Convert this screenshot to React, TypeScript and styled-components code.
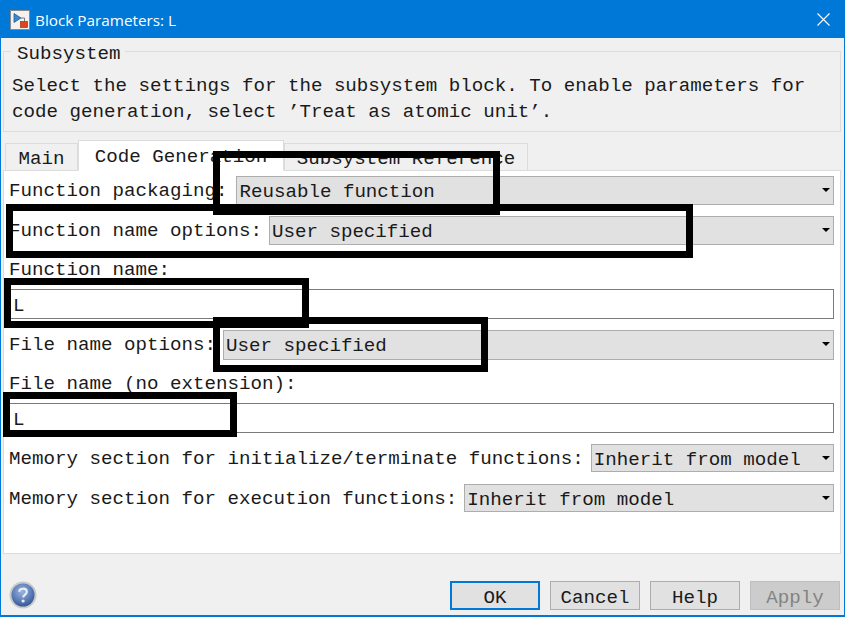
import React from 'react';
import styled, {createGlobalStyle} from 'styled-components';

const GlobalStyle = createGlobalStyle`
    html, body {
        margin: 0;
        padding: 0;
        background: #f0f0f0;
    }
`;

interface Mark {
    left: number;
    top: number;
    width: number;
    height: number;
}

// black boxes somebody drew over the screenshot
const marks: Mark[] = [
    {left: 213, top: 151, width: 287, height: 64},
    {left: 6, top: 204, width: 687, height: 54},
    {left: 4, top: 278, width: 305, height: 50},
    {left: 213, top: 317, width: 275, height: 55},
    {left: 3, top: 392, width: 234, height: 45},
];

const App = () => {
    return (
        <Window>
            <GlobalStyle/>
            <TitleBar>
                <svg width="20" height="20" viewBox="0 0 20 20">
                    <rect x="0.5" y="0.5" width="19" height="19" fill="#f4f1ee" stroke="#8a8a8a"/>
                    <path d="M4 3.5 L11 8 L4 12.5 Z" fill="#3f86c9" stroke="#1f5f9c" strokeWidth="0.8"/>
                    <path d="M11 8 H14.5 V12" fill="none" stroke="#7a7a7a"/>
                    <rect x="10.5" y="11.5" width="7" height="6" fill="#d9481c" stroke="#a8320f" strokeWidth="0.7"/>
                </svg>
                <TitleText>Block Parameters: L</TitleText>
                <CloseIcon width="13" height="13" viewBox="0 0 13 13">
                    <path d="M0.5 0.5 L12.5 12.5 M12.5 0.5 L0.5 12.5" stroke="#fff" strokeWidth="1.1"/>
                </CloseIcon>
            </TitleBar>
            <Body>
                <GroupBox>
                    <Legend>Subsystem</Legend>
                    <Description>
                        Select the settings for the subsystem block. To enable parameters for{'\n'}
                        code generation, select ’Treat as atomic unit’.
                    </Description>
                </GroupBox>
                <Tabs>
                    <Tab $width={73}>Main</Tab>
                    <Tab $width={206} $active>Code Generation</Tab>
                    <Tab $width={244}>Subsystem Reference</Tab>
                </Tabs>
                <Panel>
                    <Row $height={29}>
                        <Label $gap={9}>Function packaging:</Label>
                        <Select>Reusable function<Caret/></Select>
                    </Row>
                    <Row $height={29} $top={11}>
                        <Label>Function name options:</Label>
                        <Select>User specified<Caret/></Select>
                    </Row>
                    <PlainLabel $top={13}>Function name:</PlainLabel>
                    <TextField>L</TextField>
                    <Row $height={30} $top={11}>
                        <Label>File name options:</Label>
                        <Select>User specified<Caret/></Select>
                    </Row>
                    <PlainLabel $top={12}>File name (no extension):</PlainLabel>
                    <TextField>L</TextField>
                    <Row $height={28} $top={11}>
                        <Label>Memory section for initialize/terminate functions:</Label>
                        <Select>Inherit from model<Caret/></Select>
                    </Row>
                    <Row $height={28} $top={12}>
                        <Label>Memory section for execution functions:</Label>
                        <Select>Inherit from model<Caret/></Select>
                    </Row>
                </Panel>
                <Footer>
                    <svg width="28" height="28" viewBox="0 0 28 28">
                        <defs>
                            <radialGradient id="helpBall" cx="45%" cy="35%" r="70%">
                                <stop offset="0" stopColor="#9db4dc"/>
                                <stop offset="0.6" stopColor="#5a7cb8"/>
                                <stop offset="1" stopColor="#2f4f8f"/>
                            </radialGradient>
                        </defs>
                        <circle cx="14" cy="14" r="13.5" fill="#c8c8c8"/>
                        <circle cx="14" cy="14" r="11.5" fill="url(#helpBall)"/>
                        <path d="M10.2 10.8 C10.4 6.8 17.6 6.6 17.8 10.8 C17.9 13.6 14.3 13.6 14.2 16.4" fill="none" stroke="#e8edf6" strokeWidth="2.2"/>
                        <circle cx="14.1" cy="20" r="1.6" fill="#e8edf6"/>
                    </svg>
                    <Buttons>
                        <Button $focused>OK</Button>
                        <Button>Cancel</Button>
                        <Button>Help</Button>
                        <Button $disabled>Apply</Button>
                    </Buttons>
                </Footer>
            </Body>
            {marks.map((mark, index) => (
                <Marker
                    key={index}
                    style={{left: mark.left, top: mark.top, width: mark.width, height: mark.height}}
                />
            ))}
        </Window>
    );
};

const Window = styled.div`
    position: relative;
    width: 845px;
    height: 617px;
    box-sizing: border-box;
    display: flex;
    flex-direction: column;
    background: #f0f0f0;
    border: solid #0078d7;
    border-width: 1px 1px 2px 1px;
    overflow: hidden;
    font-family: "Liberation Mono", "DejaVu Sans Mono", monospace;
    font-size: 19.17px;
    color: #1a1a1a;
`;

const TitleBar = styled.div`
    height: 37px;
    flex: none;
    display: flex;
    align-items: center;
    padding: 0 0 0 9px;
    background: #0078d7;
    color: #fff;
`;

const TitleText = styled.span`
    margin-left: 5px;
    font-family: "Open Sans", "Liberation Sans", sans-serif;
    font-size: 15.3px;
    color: #fff;
`;

const CloseIcon = styled.svg`
    margin-left: auto;
    margin-right: 14px;
`;

const Body = styled.div`
    flex: 1;
    display: flex;
    flex-direction: column;
    padding: 13px 3px 0 2px;
    min-height: 0;
`;

const GroupBox = styled.div`
    position: relative;
    height: 81px;
    flex: none;
    box-sizing: border-box;
    border: 1px solid #dcdcdc;
`;

const Legend = styled.span`
    position: absolute;
    left: 7px;
    top: -9px;
    padding: 0 5px 0 6px;
    height: 20px;
    line-height: 22px;
    background: #f0f0f0;
`;

const Description = styled.div`
    margin: 21px 0 0 8px;
    line-height: 26px;
    white-space: pre;
`;

const Tabs = styled.div`
    display: flex;
    align-items: flex-end;
    height: 31px;
    margin-top: 8px;
    padding-left: 2px;
    flex: none;
    position: relative;
    z-index: 1;
    margin-bottom: -1px;
`;

const Tab = styled.div<{ $width: number; $active?: boolean }>`
    width: ${props => props.$width}px;
    height: ${props => (props.$active ? 31 : 28)}px;
    box-sizing: border-box;
    text-align: center;
    line-height: ${props => (props.$active ? 32 : 30)}px;
    background: ${props => (props.$active ? '#fff' : '#f0f0f0')};
    border: 1px solid #dcdcdc;
    border-bottom-color: ${props => (props.$active ? '#fff' : '#dcdcdc')};
`;

const Panel = styled.div`
    height: 384px;
    flex: none;
    box-sizing: border-box;
    display: flex;
    flex-direction: column;
    padding: 5px 6px 0 5px;
    background: #fff;
    border: 1px solid #dcdcdc;
`;

const Row = styled.div<{ $height: number; $top?: number }>`
    display: flex;
    align-items: stretch;
    flex: none;
    height: ${props => props.$height}px;
    margin-top: ${props => props.$top ?? 0}px;
`;

const Label = styled.span<{ $gap?: number }>`
    flex: none;
    padding-right: ${props => props.$gap ?? 7}px;
    line-height: 31px;
    white-space: pre;
`;

const PlainLabel = styled.div<{ $top: number }>`
    flex: none;
    height: 31px;
    line-height: 25px;
    margin-top: ${props => props.$top}px;
`;

const Select = styled.div`
    position: relative;
    flex: 1;
    box-sizing: border-box;
    padding-left: 2px;
    line-height: 30px;
    background: #e1e1e1;
    border: 1px solid #adadad;
    white-space: pre;
`;

const Caret = styled.i`
    position: absolute;
    right: 3px;
    top: 11px;
    width: 0;
    height: 0;
    border: solid transparent;
    border-width: 4px 4px 0 4px;
    border-top-color: #000;
`;

const TextField = styled.div`
    height: 30px;
    flex: none;
    box-sizing: border-box;
    padding-left: 3px;
    line-height: 32px;
    background: #fff;
    border: 1px solid #7a7a7a;
`;

const Footer = styled.div`
    flex: 1;
    display: flex;
    justify-content: space-between;
    align-items: flex-start;
    padding: 27px 0 0 6px;
`;

const Buttons = styled.div`
    display: flex;
    gap: 10px;
    margin-right: 1px;
`;

const Button = styled.div<{ $focused?: boolean; $disabled?: boolean }>`
    width: 90px;
    height: 29px;
    box-sizing: border-box;
    text-align: center;
    line-height: ${props => (props.$focused ? 30 : 32)}px;
    background: ${props => (props.$disabled ? '#cccccc' : '#e1e1e1')};
    color: ${props => (props.$disabled ? '#838383' : '#1a1a1a')};
    border: ${props => (props.$focused ? '2px solid #0078d7' : `1px solid ${props.$disabled ? '#bfbfbf' : '#adadad'}`)};
`;

const Marker = styled.div`
    position: absolute;
    z-index: 2;
    margin: -1px 0 0 -1px;
    box-sizing: border-box;
    border: 7px solid #000;
`;

export default App;
